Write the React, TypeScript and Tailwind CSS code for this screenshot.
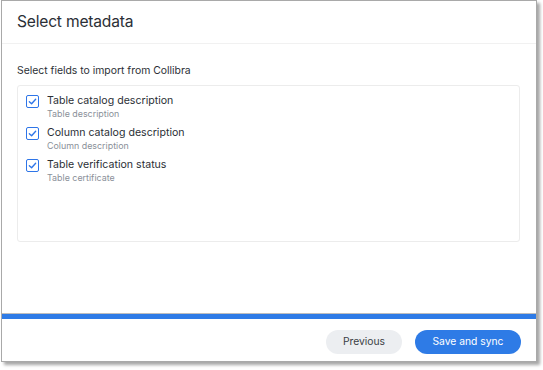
import React from "react";

const fields = [
  { label: "Table catalog description", sub: "Table description" },
  { label: "Column catalog description", sub: "Column description" },
  { label: "Table verification status", sub: "Table certificate" },
];

const CheckBox = () => (
  <span className="w-[13px] h-[13px] rounded-[2px] border border-[#2e75e8] bg-white flex items-center justify-center shrink-0">
    <svg width="9" height="9" viewBox="0 0 10 10" fill="none">
      <path d="M1.5 5.2 L4 7.5 L8.5 2.5" stroke="#2e75e8" strokeWidth="1.5" strokeLinecap="round" strokeLinejoin="round" />
    </svg>
  </span>
);

export default function App() {
  return (
    <div className="w-[543px] h-[370px] bg-white" style={{ fontFamily: "Inter, 'Noto Sans', sans-serif" }}>
      <div className="ml-[1px] w-[536px] h-[362px] bg-white border border-[#a9a9a9] shadow-[3px_3px_3px_rgba(0,0,0,0.35)] flex flex-col">
        {/* Header */}
        <div className="h-[43px] border-b border-[#f1f1f1] pl-[15px] flex items-center">
          <h2 className="text-[15.6px] text-[#2b2f36] tracking-[-0.2px]">Select metadata</h2>
        </div>

        {/* Body */}
        <div className="flex-1 pl-[15px] pr-4 pt-[19px]">
          <p className="text-[10.4px] text-[#2b2f36]">Select fields to import from Collibra</p>
          <div className="mt-[6px] h-[157px] border border-[#ececec] rounded-[3px] pl-[8px] pt-[7px] flex flex-col gap-[5.5px]">
            {fields.map((f) => (
              <div key={f.label} className="flex items-start gap-[8px]">
                <div className="pt-[2px]">
                  <CheckBox />
                </div>
                <div className="flex flex-col">
                  <span className="text-[10.6px] leading-[15px] text-[#2b2f36]">{f.label}</span>
                  <span className="text-[8.9px] leading-[11.5px] text-[#8a9099]">{f.sub}</span>
                </div>
              </div>
            ))}
          </div>
        </div>

        {/* Footer */}
        <div className="border-t border-[#bdbdbd]">
          <div className="h-[5px] bg-[#2e7be6]" />
          <div className="h-[42px] pt-[4px] flex items-center justify-end gap-[13px] pr-[15px]">
            <button className="w-[76px] h-[24px] rounded-full bg-[#eceef1] text-[10.3px] text-[#3b3f45]">Previous</button>
            <button className="w-[106px] h-[24px] rounded-full bg-[#2e7be6] text-[10.3px] text-white">Save and sync</button>
          </div>
        </div>
      </div>
    </div>
  );
}
